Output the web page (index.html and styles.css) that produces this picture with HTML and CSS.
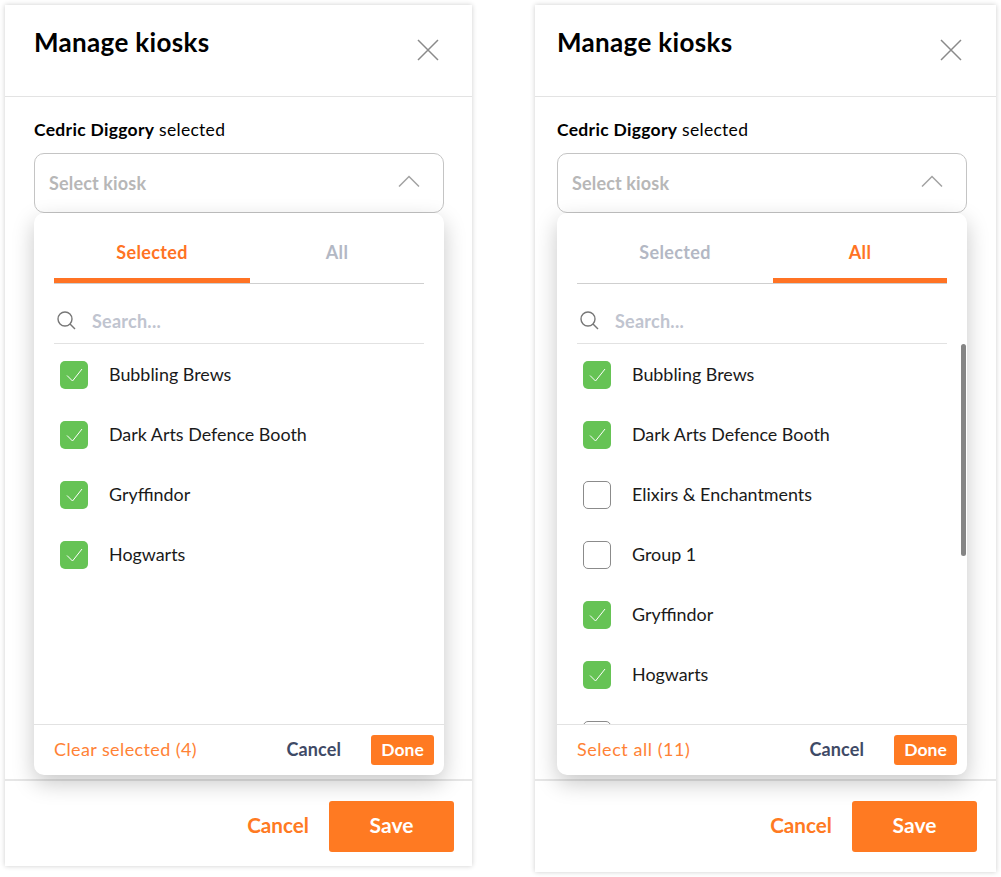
FILE: index.html
```html
<!DOCTYPE html>
<html lang="en">
<head>
<meta charset="utf-8">
<title>Manage kiosks</title>
<link rel="stylesheet" href="styles.css">
</head>
<body>
<main class="page">
  <section class="panel panel-a">
    <header class="head">
      <h1 class="title">Manage kiosks</h1>
      <svg class="close" viewBox="0 0 22 22" width="22" height="22"><path d="M1 1l20 20M21 1L1 21"/></svg>
    </header>
    <div class="body">
      <p class="label"><b>Cedric Diggory</b> selected</p>
      <div class="select">
        <span class="placeholder">Select kiosk</span>
        <svg class="chev" viewBox="0 0 22 12" width="22" height="12"><path d="M1 11.5L11 1.5l10 10"/></svg>
      </div>
      <div class="pop">
        <div class="tabs">
          <div class="tab tab-wide active">Selected</div>
          <div class="tab tab-narrow">All</div>
        </div>
        <div class="search">
          <svg class="lens" viewBox="0 0 19 19" width="19" height="19"><circle cx="8" cy="8" r="7"/><path d="M13 13l5 5"/></svg>
          <span class="search-text">Search...</span>
        </div>
        <ul class="list">
          <li class="row"><span class="box on"><svg viewBox="0 0 28 28" width="28" height="28"><path d="M7 14.5l5.5 5.5L22 8"/></svg></span><span class="name">Bubbling Brews</span></li>
          <li class="row"><span class="box on"><svg viewBox="0 0 28 28" width="28" height="28"><path d="M7 14.5l5.5 5.5L22 8"/></svg></span><span class="name">Dark Arts Defence Booth</span></li>
          <li class="row"><span class="box on"><svg viewBox="0 0 28 28" width="28" height="28"><path d="M7 14.5l5.5 5.5L22 8"/></svg></span><span class="name">Gryffindor</span></li>
          <li class="row"><span class="box on"><svg viewBox="0 0 28 28" width="28" height="28"><path d="M7 14.5l5.5 5.5L22 8"/></svg></span><span class="name">Hogwarts</span></li>
        </ul>
        <div class="pop-foot">
          <span class="link link-clear">Clear selected (4)</span>
          <span class="pop-cancel">Cancel</span>
          <span class="done">Done</span>
        </div>
      </div>
    </div>
    <footer class="foot">
      <span class="foot-cancel">Cancel</span>
      <span class="save">Save</span>
    </footer>
  </section>

  <section class="panel panel-b">
    <header class="head">
      <h1 class="title">Manage kiosks</h1>
      <svg class="close" viewBox="0 0 22 22" width="22" height="22"><path d="M1 1l20 20M21 1L1 21"/></svg>
    </header>
    <div class="body">
      <p class="label"><b>Cedric Diggory</b> selected</p>
      <div class="select">
        <span class="placeholder">Select kiosk</span>
        <svg class="chev" viewBox="0 0 22 12" width="22" height="12"><path d="M1 11.5L11 1.5l10 10"/></svg>
      </div>
      <div class="pop">
        <div class="tabs">
          <div class="tab tab-wide">Selected</div>
          <div class="tab tab-narrow active">All</div>
        </div>
        <div class="search">
          <svg class="lens" viewBox="0 0 19 19" width="19" height="19"><circle cx="8" cy="8" r="7"/><path d="M13 13l5 5"/></svg>
          <span class="search-text">Search...</span>
        </div>
        <ul class="list">
          <li class="row"><span class="box on"><svg viewBox="0 0 28 28" width="28" height="28"><path d="M7 14.5l5.5 5.5L22 8"/></svg></span><span class="name">Bubbling Brews</span></li>
          <li class="row"><span class="box on"><svg viewBox="0 0 28 28" width="28" height="28"><path d="M7 14.5l5.5 5.5L22 8"/></svg></span><span class="name">Dark Arts Defence Booth</span></li>
          <li class="row"><span class="box"></span><span class="name">Elixirs &amp; Enchantments</span></li>
          <li class="row"><span class="box"></span><span class="name">Group 1</span></li>
          <li class="row"><span class="box on"><svg viewBox="0 0 28 28" width="28" height="28"><path d="M7 14.5l5.5 5.5L22 8"/></svg></span><span class="name">Gryffindor</span></li>
          <li class="row"><span class="box on"><svg viewBox="0 0 28 28" width="28" height="28"><path d="M7 14.5l5.5 5.5L22 8"/></svg></span><span class="name">Hogwarts</span></li>
          <li class="row"><span class="box"></span></li>
        </ul>
        <div class="thumb"></div>
        <div class="pop-foot">
          <span class="link link-all">Select all (11)</span>
          <span class="pop-cancel">Cancel</span>
          <span class="done">Done</span>
        </div>
      </div>
    </div>
    <footer class="foot">
      <span class="foot-cancel">Cancel</span>
      <span class="save">Save</span>
    </footer>
  </section>
</main>
</body>
</html>
```
FILE: styles.css
```css
* { box-sizing: border-box; }
html, body { margin: 0; padding: 0; background: #fff; }
body { font-family: "Lato", "Noto Sans", sans-serif; color: #000; width: 1001px; height: 877px; overflow: hidden; }

.page { display: flex; align-items: flex-start; gap: 63px; padding: 5px 0 0 5px; }

.panel { display: flex; flex-direction: column; background: #fff; box-shadow: 0 0 5px rgba(0, 0, 0, .2); }
.panel-a { width: 467px; height: 861px; --inset: 29px; --foot-right: 18px; --close-right: 33px; }
.panel-b { width: 461px; height: 867px; --inset: 22px; --foot-right: 19px; --close-right: 34px; }

.head { height: 92px; flex: none; display: flex; justify-content: space-between; align-items: flex-start; padding: 0 var(--close-right) 0 var(--inset); border-bottom: 1px solid #e3e3e3; }
.title { margin: 19px 0 0; font-size: 26px; line-height: 36px; font-weight: 700; letter-spacing: .33px; }
.close { margin-top: 34px; }
.close path { fill: none; stroke: #8a8a8a; stroke-width: 1.5; }

.body { flex: none; height: 682px; padding: 23px 0 0 var(--inset); }
.label { margin: 0; font-size: 17.5px; line-height: 20px; letter-spacing: .3px; }
.select { width: 410px; height: 60px; margin-top: 13px; display: flex; justify-content: space-between; align-items: center; padding: 0 23px 0 14px; border: 1px solid #c4c4c4; border-radius: 10px; }
.placeholder { font-size: 18px; font-weight: 700; letter-spacing: .15px; color: #b7b7b7; }
.chev { margin-top: -5px; }
.chev path { fill: none; stroke: #a3a3a3; stroke-width: 1.5; }

.pop { position: relative; width: 410px; height: 562px; display: flex; flex-direction: column; background: #fff; border-radius: 10px; box-shadow: 0 8px 22px rgba(0, 0, 0, .22); }
.tabs { flex: none; display: flex; height: 71px; margin: 0 20px; border-bottom: 1px solid #cfcfcf; }
.tab { height: 70px; padding-top: 26px; text-align: center; font-size: 18px; line-height: 26px; font-weight: 700; letter-spacing: .35px; color: #b3b8c4; }
.tab.active { color: #ff7324; border-bottom: 5px solid #ff7324; }
.tab-wide { width: 196px; }
.tab-narrow { width: 174px; }

.search { flex: none; height: 60px; margin: 0 20px; display: flex; align-items: center; gap: 16px; padding: 14px 0 0 3px; border-bottom: 1px solid #e2e2e2; }
.lens { flex: none; }
.lens circle, .lens path { fill: none; stroke: #777; stroke-width: 1.4; }
.search-text { font-size: 18px; font-weight: 700; letter-spacing: .25px; color: #c0c4cf; }

.list { flex: 1; min-height: 0; overflow: hidden; list-style: none; margin: 0; padding: 0 0 0 26px; }
.row { height: 60px; display: flex; align-items: center; gap: 21px; font-size: 17.9px; }
.box { flex: none; width: 28px; height: 28px; margin-top: 2px; border: 1px solid #8b8b8b; border-radius: 5px; }
.box.on { border: 0; background: #66c355; }
.box svg { display: block; }
.box path { fill: none; stroke: #fff; stroke-width: 1; }
.name { color: #1a1a1a; }

.thumb { position: absolute; right: 1px; top: 131px; width: 5px; height: 212px; border-radius: 3px; background: #858585; }

.pop-foot { flex: none; height: 51px; display: flex; align-items: center; padding: 0 10px 0 20px; border-top: 1px solid #e2e2e2; }
.link { flex: 1; font-size: 18px; color: #ff8235; margin-top: -2px; }
.link-clear { letter-spacing: .4px; }
.link-all { letter-spacing: .55px; }
.pop-cancel { font-size: 18px; font-weight: 700; letter-spacing: .1px; color: #3f4a66; margin: -2px 30px 0 0; }
.done { width: 63px; height: 30px; display: flex; align-items: center; justify-content: center; padding-bottom: 2px; border-radius: 3px; background: #ff7a22; color: #fff; font-size: 17.5px; font-weight: 700; }

.foot { flex: 1; display: flex; justify-content: flex-end; align-items: flex-start; gap: 20px; padding: 20px var(--foot-right) 0 0; border-top: 2px solid #e6e6e6; }
.foot-cancel { height: 51px; line-height: 48px; font-size: 20.7px; font-weight: 700; color: #ff7a22; }
.save { width: 125px; height: 51px; display: flex; align-items: center; justify-content: center; padding-bottom: 4px; border-radius: 3px; background: #ff7a22; color: #fff; font-size: 21px; font-weight: 700; }
```
